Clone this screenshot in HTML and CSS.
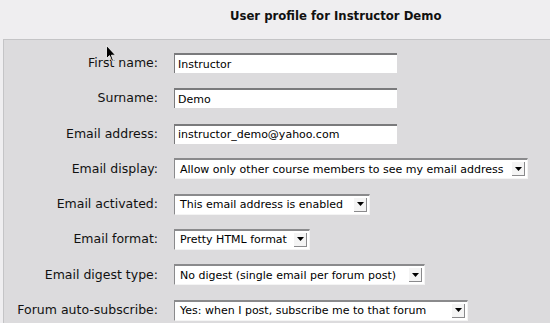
FILE: index.html
```html
<!DOCTYPE html>
<html lang="en">
<head>
    <meta charset="UTF-8">
    <title>User profile for Instructor Demo</title>
    <link rel="stylesheet" href="styles.css">
</head>
<body>
    <h2 class="page-title">User profile for Instructor Demo</h2>

    <div class="panel">
        <div class="form-grid">
            <label class="field-label">First name:</label>
            <div class="field"><input class="text-input wide" type="text" value="Instructor"></div>

            <label class="field-label">Surname:</label>
            <div class="field"><input class="text-input wide" type="text" value="Demo"></div>

            <label class="field-label">Email address:</label>
            <div class="field"><input class="text-input wide" type="text" value="instructor_demo@yahoo.com"></div>

            <label class="field-label">Email display:</label>
            <div class="field">
                <div class="select w-display">
                    <span class="select-text">Allow only other course members to see my email address</span>
                    <span class="select-arrow"><svg width="7" height="4" viewBox="0 0 7 4"><path d="M0 0H7L3.5 4Z" fill="#000"/></svg></span>
                </div>
            </div>

            <label class="field-label">Email activated:</label>
            <div class="field">
                <div class="select w-activated">
                    <span class="select-text">This email address is enabled</span>
                    <span class="select-arrow"><svg width="7" height="4" viewBox="0 0 7 4"><path d="M0 0H7L3.5 4Z" fill="#000"/></svg></span>
                </div>
            </div>

            <label class="field-label">Email format:</label>
            <div class="field">
                <div class="select w-format">
                    <span class="select-text">Pretty HTML format</span>
                    <span class="select-arrow"><svg width="7" height="4" viewBox="0 0 7 4"><path d="M0 0H7L3.5 4Z" fill="#000"/></svg></span>
                </div>
            </div>

            <label class="field-label">Email digest type:</label>
            <div class="field">
                <div class="select w-digest">
                    <span class="select-text">No digest (single email per forum post)</span>
                    <span class="select-arrow"><svg width="7" height="4" viewBox="0 0 7 4"><path d="M0 0H7L3.5 4Z" fill="#000"/></svg></span>
                </div>
            </div>

            <label class="field-label">Forum auto-subscribe:</label>
            <div class="field">
                <div class="select w-forum">
                    <span class="select-text">Yes: when I post, subscribe me to that forum</span>
                    <span class="select-arrow"><svg width="7" height="4" viewBox="0 0 7 4"><path d="M0 0H7L3.5 4Z" fill="#000"/></svg></span>
                </div>
            </div>
        </div>
    </div>

    <!-- mouse pointer caught in the screenshot -->
    <svg class="cursor" width="11" height="17" viewBox="0 0 11 17">
        <path d="M0.5 0.5V13.5L3.5 10.6L5.7 15.8H7.5L5.4 10.2H9.5Z" fill="#000" stroke="#fff" stroke-width="0.8"/>
    </svg>
</body>
</html>
```

FILE: styles.css
```css
* {
    margin: 0;
    padding: 0;
    box-sizing: border-box;
}
html, body {
    height: 100%;
    overflow: hidden;
}
body {
    font-family: "DejaVu Sans", Verdana, sans-serif;
    background-color: #efeef0;
    position: relative;
}
.page-title {
    height: 39px;
    padding: 9px 0 0 230px;
    font-size: 11.7px;
    font-weight: bold;
    color: #111;
}
.panel {
    margin-left: 3px;
    height: 300px;
    background: #dcdbdd;
    border-top: 1px solid #c4c4c6;
    border-left: 1px solid #c4c4c6;
    padding-top: 13px;
}
.form-grid {
    display: grid;
    grid-template-columns: 154px auto;
    column-gap: 16px;
    grid-auto-rows: 20px;
    row-gap: 15.3px;
}
.field-label {
    font-size: 12.5px;
    color: #111;
    text-align: right;
    line-height: 19px;
}
.field {
    display: flex;
    align-items: center;
}
.text-input {
    height: 20px;
    font-family: "DejaVu Sans", Verdana, sans-serif;
    font-size: 11px;
    color: #000;
    background: #fff;
    border: none;
    border-top: 2px solid #7a7a7c;
    border-left: 1px solid #7a7a7c;
    padding: 0 3px 0 3px;
    outline: none;
}
.wide {
    width: 223px;
}
.select {
    height: 21px;
    display: flex;
    align-items: center;
    justify-content: space-between;
    background: #fff;
    border-top: 2px solid #8a8a8c;
    border-left: 1px solid #8a8a8c;
    border-right: 1px solid #f4f4f4;
    border-bottom: 1px solid #f4f4f4;
    padding: 0 2px 0 5px;
    font-size: 11px;
    color: #000;
    white-space: nowrap;
}
.select-arrow {
    width: 13px;
    height: 14px;
    display: flex;
    align-items: center;
    justify-content: center;
    background: #f4f4f4;
    border-right: 1px solid #8a8a8c;
    border-bottom: 1px solid #8a8a8c;
}
.w-display { width: 354px; }
.w-activated { width: 196px; }
.w-format { width: 136px; }
.w-digest { width: 251px; }
.w-forum { width: 294px; }
.cursor {
    position: absolute;
    left: 106px;
    top: 45px;
}
```
